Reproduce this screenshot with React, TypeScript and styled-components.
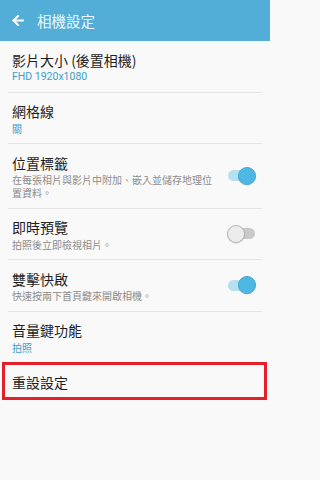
import React from "react";
import styled, { createGlobalStyle } from "styled-components";

const Global = createGlobalStyle`
  html, body { margin: 0; padding: 0; background: #f9f9f9; }
  body {
    font-family: "Noto Sans CJK TC", "Noto Sans", Roboto, sans-serif;
    width: 270px;
    height: 480px;
    overflow: hidden;
  }
`;

const Page = styled.div`
  width: 270px;
  height: 480px;
  background: #f9f9f9;
  display: flex;
  flex-direction: column;
`;

const Header = styled.header`
  height: 41px;
  background: #52aed6;
  display: flex;
  align-items: center;
  padding-left: 12px;
  gap: 13px;
  box-sizing: border-box;
  flex-shrink: 0;
`;

const HeaderTitle = styled.div`
  color: #eef7fb;
  font-size: 14.5px;
  line-height: 21px;
`;

const List = styled.div`
  display: flex;
  flex-direction: column;
  padding: 0 8px;
`;

const Row = styled.div<{ $reset?: boolean }>`
  display: flex;
  align-items: center;
  padding: ${(p) => (p.$reset ? "9px 6px 9px 4px" : "8.5px 6px 8.5px 4px")};
  border-bottom: ${(p) => (p.$reset ? "none" : "1px solid #e4e4e4")};
  position: relative;
`;

const RowText = styled.div`
  flex: 1;
  min-width: 0;
  display: flex;
  flex-direction: column;
  padding-right: 6px;
`;

const Title = styled.div`
  font-size: 14px;
  line-height: 20px;
  height: 20px;
  color: #1f1f1f;
`;

const Sub = styled.div<{ $accent?: boolean; $latin?: boolean }>`
  margin-top: 0.5px;
  font-size: ${(p) => (p.$latin ? "10.5px" : "10px")};
  line-height: 13px;
  color: ${(p) => (p.$accent ? "#3b9ecb" : "#8c8c8c")};
  font-family: ${(p) => (p.$latin ? "Roboto, sans-serif" : '"Noto Sans CJK TC", sans-serif')};
`;

const SwitchBox = styled.div`
  width: 29px;
  height: 18px;
  position: relative;
  flex-shrink: 0;
`;

const Track = styled.div<{ $on: boolean }>`
  position: absolute;
  left: 1px;
  right: 1px;
  top: 3.5px;
  height: 11px;
  border-radius: 6px;
  background: ${(p) => (p.$on ? "#b5e0f2" : "#c9c9c9")};
`;

const Knob = styled.div<{ $on: boolean }>`
  position: absolute;
  top: 0;
  left: ${(p) => (p.$on ? "11px" : "0")};
  width: 18px;
  height: 18px;
  border-radius: 50%;
  box-sizing: border-box;
  background: ${(p) => (p.$on ? "#4db8e3" : "#ececec")};
  border: 1px solid ${(p) => (p.$on ? "#47a9d1" : "#b9b9b9")};
  box-shadow: 0 0.5px 1px rgba(0, 0, 0, 0.18);
`;

const Highlight = styled.div`
  position: absolute;
  left: -6px;
  right: -5px;
  top: -1px;
  bottom: 1px;
  border: 3px solid #e51f2a;
  pointer-events: none;
`;

const Switch = ({ on }: { on: boolean }) => (
  <SwitchBox>
    <Track $on={on} />
    <Knob $on={on} />
  </SwitchBox>
);

const BackArrow = () => (
  <svg width="12" height="11" viewBox="0 0 12 11" fill="none">
    <path
      d="M11.5 5.5H1.5M6 1L1.5 5.5L6 10"
      stroke="#ffffff"
      strokeWidth="2"
      strokeLinecap="square"
    />
  </svg>
);

export default function App() {
  return (
    <>
      <Global />
      <Page>
        <Header>
          <BackArrow />
          <HeaderTitle>相機設定</HeaderTitle>
        </Header>
        <List>
          <Row>
            <RowText>
              <Title>影片大小 (後置相機)</Title>
              <Sub $accent $latin>FHD 1920x1080</Sub>
            </RowText>
          </Row>
          <Row>
            <RowText>
              <Title>網格線</Title>
              <Sub $accent>關</Sub>
            </RowText>
          </Row>
          <Row>
            <RowText>
              <Title>位置標籤</Title>
              <Sub>在每張相片與影片中附加、嵌入並儲存地理位置資料。</Sub>
            </RowText>
            <Switch on />
          </Row>
          <Row>
            <RowText>
              <Title>即時預覽</Title>
              <Sub>拍照後立即檢視相片。</Sub>
            </RowText>
            <Switch on={false} />
          </Row>
          <Row>
            <RowText>
              <Title>雙擊快啟</Title>
              <Sub>快速按兩下首頁鍵來開啟相機。</Sub>
            </RowText>
            <Switch on />
          </Row>
          <Row>
            <RowText>
              <Title>音量鍵功能</Title>
              <Sub $accent>拍照</Sub>
            </RowText>
          </Row>
          <Row $reset>
            <RowText>
              <Title>重設設定</Title>
            </RowText>
            <Highlight />
          </Row>
        </List>
      </Page>
    </>
  );
}
